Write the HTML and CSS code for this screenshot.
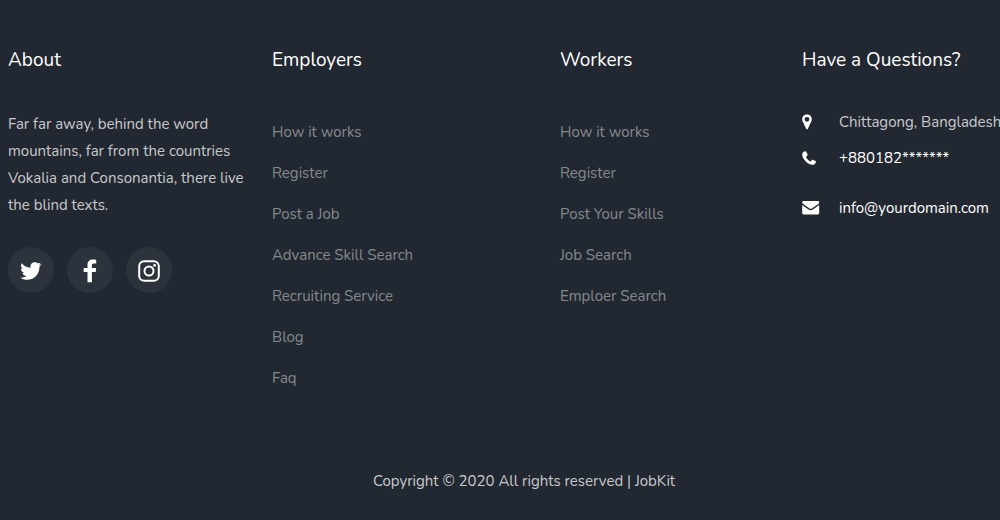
FILE: index.html
```html
<!DOCTYPE html>
<html lang="en">
<head>
<meta charset="utf-8">
<title>JobKit</title>
<link rel="stylesheet" href="styles.css">
</head>
<body>
<footer class="footer">
  <div class="columns">
    <section class="column">
      <h2 class="heading">About</h2>
      <p class="about">Far far away, behind the word mountains, far from the countries Vokalia and Consonantia, there live the blind texts.</p>
      <ul class="social">
        <li><a class="social-link" href="#" aria-label="Twitter"><svg width="22" height="18" viewBox="0 0 22 18" aria-hidden="true"><path d="M21.500 2.200 19.500 4.500C19.500 12 14.500 17.800 7.500 17.800 4.800 17.800 2.500 17 .5 15.700c2.300.2 4.400-.4 6-1.700-2-.1-3.500-1.300-4.100-3.100h1.900C2.300 10.400.9 8.700.9 6.500l2 .6C1 5.600.5 3.300 1.600 1.200c2.200 2.700 5.300 4.300 9 4.500C9.900 2.600 12 .2 14.800.2c1.300 0 2.400.5 3.200 1.400l2.700-1.100-1.500 2.300z"/></svg></a></li>
        <li><a class="social-link" href="#" aria-label="Facebook"><svg width="14" height="24" viewBox="0 0 14 24" aria-hidden="true"><path d="M13.200.8V4.500h-2.300C9.300 4.500 8.900 5.300 8.900 6.500v2.400h4.300l-.5 4H8.900V23.300H4.500V12.900H.7v-4h3.800V5.900C4.500 2.500 6.700.6 9.800.6c1.500 0 2.800.1 3.400.2z"/></svg></a></li>
        <li><a class="social-link" href="#" aria-label="Instagram"><svg width="22" height="22" viewBox="0 0 22 22" aria-hidden="true"><rect class="line" x="1.200" y="1.200" width="19.600" height="19.600" rx="5"/><circle class="line" cx="11" cy="11" r="4.500"/><circle cx="16.600" cy="5.400" r="1.400"/></svg></a></li>
      </ul>
    </section>
    <nav class="column" aria-labelledby="employers">
      <h2 class="heading" id="employers">Employers</h2>
      <ul class="links">
        <li><a href="#">How it works</a></li>
        <li><a href="#">Register</a></li>
        <li><a href="#">Post a Job</a></li>
        <li><a href="#">Advance Skill Search</a></li>
        <li><a href="#">Recruiting Service</a></li>
        <li><a href="#">Blog</a></li>
        <li><a href="#">Faq</a></li>
      </ul>
    </nav>
    <nav class="column" aria-labelledby="workers">
      <h2 class="heading" id="workers">Workers</h2>
      <ul class="links">
        <li><a href="#">How it works</a></li>
        <li><a href="#">Register</a></li>
        <li><a href="#">Post Your Skills</a></li>
        <li><a href="#">Job Search</a></li>
        <li><a href="#">Emploer Search</a></li>
      </ul>
    </nav>
    <section class="column">
      <h2 class="heading">Have a Questions?</h2>
      <ul class="contact">
        <li class="contact-item"><svg width="18" height="16" viewBox="0 0 18 16" aria-hidden="true"><path fill-rule="evenodd" d="M5 .5C2.200.5.200 2.600.200 5.200c0 1.200.3 1.900.8 2.900l3.100 6.600c.4.800 1.400.8 1.800 0L9 8.100c.5-1 .8-1.700.8-2.900C9.800 2.600 7.800.5 5 .5zM5 2.900a2.400 2.400 0 1 1 0 4.800 2.400 2.400 0 0 1 0-4.800z"/></svg><span>Chittagong, Bangladesh</span></li>
        <li><a class="contact-item" href="#"><svg width="18" height="16" viewBox="0 0 18 16" aria-hidden="true"><path d="M3.200 1.200c.4-.1.700 0 .9.400l1.500 2.900c.2.400.1.700-.2 1L4 6.900c1 2.100 2.500 3.500 4.600 4.500L10 9.900c.3-.3.600-.3.900-.2l2.600 1.400c.4.200.5.500.4.900-.3 1.900-1.800 2.800-3.500 2.800C5.600 14.400.6 9.200.2 4.700.1 3.100 1.200 1.500 3.200 1.200z"/></svg><span>+880182*******</span></a></li>
        <li><a class="contact-item contact-mail" href="#"><svg width="18" height="16" viewBox="0 0 18 16" aria-hidden="true"><path d="M1.500 1h14.400c.8 0 1.300.5 1.300 1.200 0 .9-.6 1.600-1.300 2.100L10.200 8.300c-1 .7-2 .7-3 0L1.600 4.300C.8 3.800.2 3.100.2 2.300.2 1.500.7 1 1.500 1zM.2 5.100 6.500 9.500c1.500 1 2.900 1 4.400 0L17.200 5.100V13c0 .8-.6 1.400-1.400 1.400H1.600C.8 14.400.2 13.800.2 13z"/></svg><span>info@yourdomain.com</span></a></li>
      </ul>
    </section>
  </div>
  <p class="copyright">Copyright © 2020 All rights reserved | JobKit</p>
</footer>
</body>
</html>
```
FILE: styles.css
```css
* {
  box-sizing: border-box;
}

body {
  margin: 0;
  background: #222831;
  color: #c8c9cb;
  font-family: Nunito, Lato, sans-serif;
  font-size: 15px;
  line-height: 27px;
}

ul,
p,
h2 {
  margin: 0;
  padding: 0;
}

ul {
  list-style: none;
}

a {
  color: inherit;
  text-decoration: none;
}

svg {
  flex: none;
  fill: #fff;
}

.footer {
  min-height: 100vh;
  padding: 49px 0 24px 8px;
}

.columns {
  display: grid;
  grid-template-columns: 264fr 288fr 242fr 198fr;
}

.column {
  min-width: 0;
}

.heading {
  margin-bottom: 40px;
  color: #fff;
  font-size: 19px;
  font-weight: 400;
  line-height: 22px;
}

.about {
  padding-right: 24px;
}

.social {
  display: flex;
  gap: 13px;
  margin-top: 28px;
}

.social-link {
  display: flex;
  align-items: center;
  justify-content: center;
  width: 46px;
  height: 46px;
  padding-top: 2px;
  border-radius: 50%;
  background: #2d333c;
}

.line {
  fill: none;
  stroke: #fff;
  stroke-width: 2;
}

.links {
  padding-top: 1px;
  color: #85888c;
  line-height: 41px;
}

.contact {
  line-height: 22px;
  white-space: nowrap;
}

.contact-item {
  display: flex;
  align-items: center;
  gap: 19px;
  margin-bottom: 14px;
}

a.contact-item {
  color: #fff;
}

.contact-mail {
  margin-top: 28px;
}

.copyright {
  margin-top: 69px;
  padding-left: 40px;
  text-align: center;
}
```
